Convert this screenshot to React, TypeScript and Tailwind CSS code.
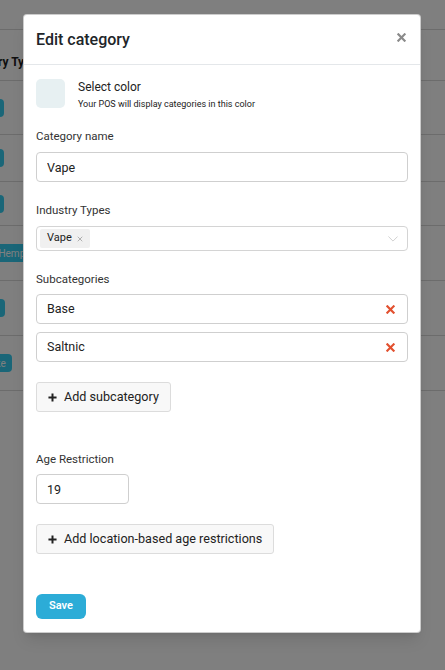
import React from 'react';

// rows of the categories table sitting behind the dialog
const tableRows = [
  { id: 1, height: 'h-[54px]', tags: ['Vape'] },
  { id: 2, height: 'h-[47px]', tags: ['Vape'] },
  { id: 3, height: 'h-[44px]', tags: ['Vape'] },
  { id: 4, height: 'h-[55px]', tags: ['CBD/Hemp', 'Vape'] },
  { id: 5, height: 'h-[55px]', tags: ['Other'] },
  { id: 6, height: 'h-[55px]', tags: ['Smoke'] },
];

const CloseIcon = ({ className }: { className?: string }) => (
  <svg viewBox="0 0 10 10" className={className} fill="none" stroke="currentColor" strokeWidth="2.4" strokeLinecap="square">
    <path d="M1.5 1.5 L8.5 8.5 M8.5 1.5 L1.5 8.5" />
  </svg>
);

const PlusIcon = () => (
  <svg viewBox="0 0 10 10" className="h-[9px] w-[9px]" fill="none" stroke="currentColor" strokeWidth="2.2">
    <path d="M5 0.5 V9.5 M0.5 5 H9.5" />
  </svg>
);

const Label = ({ children }: { children: React.ReactNode }) => (
  <div className="text-[11.5px] leading-[14px] text-[#333]">{children}</div>
);

const TextInput = ({ value, className = '' }: { value: string; className?: string }) => (
  <input
    readOnly
    value={value}
    className={`h-[30px] rounded-[4px] border border-[#cfcfcf] px-[10px] text-[12.5px] text-[#222] outline-none ${className}`}
  />
);

const SubcategoryRow = ({ name }: { name: string }) => (
  <div className="flex h-[30px] items-center justify-between rounded-[4px] border border-[#cfcfcf] pl-[10px] pr-[12px]">
    <span className="text-[12.5px] text-[#222]">{name}</span>
    <CloseIcon className="h-[9px] w-[9px] text-[#e2502f]" />
  </div>
);

const GhostButton = ({ children }: { children: React.ReactNode }) => (
  <button
    type="button"
    className="flex h-[30px] items-center gap-[7px] rounded-[3px] border border-[#dcdcdc] bg-[#f8f8f8] px-[11px] text-[12.6px] text-[#222]"
  >
    <PlusIcon />
    {children}
  </button>
);

export default function App() {
  return (
    <div className="relative h-[670px] w-[445px] overflow-hidden bg-white font-['Roboto',sans-serif]">
      {/* categories page underneath */}
      <div className="pt-[29px]">
        <div className="border-t border-[#d9d9d9]">
          <div className="flex h-[51px] items-end border-b border-[#d9d9d9] pb-[11px]">
            <span className="ml-[-36px] whitespace-nowrap text-[12px] font-bold leading-[14px] text-[#212121]">Industry Types</span>
          </div>
          {tableRows.map((row) => (
            <div key={row.id} className={`flex items-center border-b border-[#d9d9d9] ${row.height}`}>
              <div className="ml-[-31px] flex gap-[4px]">
                {row.tags.map((tag) => (
                  <span
                    key={tag}
                    className="flex h-[18px] items-center whitespace-nowrap rounded-[4px] bg-[#35cdf0] px-[6px] text-[10px] text-white"
                  >
                    {tag}
                  </span>
                ))}
              </div>
            </div>
          ))}
        </div>
      </div>

      {/* backdrop + dialog */}
      <div className="absolute inset-0 bg-black/50 pl-[23px] pt-[14px]">
        <div className="w-[398px] rounded-[4px] border border-black/20 bg-white shadow-lg">
          <div className="flex h-[50px] items-center justify-between border-b border-[#e4e7ea] pl-[12px] pr-[14px]">
            <h2 className="text-[16px] font-medium text-[#212529]">Edit category</h2>
            <CloseIcon className="mb-[5px] h-[9px] w-[9px] text-[#8a8a8a]" />
          </div>

          <div className="px-[12px] pb-[13px] pt-[14px]">
            <div className="flex gap-[13px]">
              <div className="h-[29px] w-[29px] rounded-[5px] bg-[#e7f0f2]" />
              <div className="mt-[1px]">
                <div className="text-[12px] leading-[14px] text-[#222]">Select color</div>
                <div className="mt-[4px] text-[9px] leading-[12px] text-[#222]">
                  Your POS will display categories in this color
                </div>
              </div>
            </div>

            <div className="mt-[19px]">
              <Label>Category name</Label>
              <TextInput value="Vape" className="mt-[9px] w-full" />
            </div>

            <div className="mt-[21px]">
              <Label>Industry Types</Label>
              <div className="mt-[9px] flex h-[25px] items-center justify-between rounded-[4px] border border-[#d4d4d4] pl-[3px] pr-[9px]">
                <span className="flex h-[19px] items-center gap-[5px] rounded-[2px] bg-[#f0f0f0] px-[7px] text-[11px] text-[#222]">
                  Vape
                  <svg viewBox="0 0 8 8" className="h-[6px] w-[6px] text-[#999]" fill="none" stroke="currentColor" strokeWidth="1">
                    <path d="M1 1 L7 7 M7 1 L1 7" />
                  </svg>
                </span>
                <svg viewBox="0 0 12 7" className="h-[6px] w-[10px] text-[#c8c8c8]" fill="none" stroke="currentColor" strokeWidth="1">
                  <path d="M0.5 0.5 L6 6 L11.5 0.5" />
                </svg>
              </div>
            </div>

            <div className="mt-[21px]">
              <Label>Subcategories</Label>
              <div className="mt-[8px] flex flex-col gap-[8px]">
                <SubcategoryRow name="Base" />
                <SubcategoryRow name="Saltnic" />
              </div>
              <div className="mt-[20px] flex">
                <GhostButton>Add subcategory</GhostButton>
              </div>
            </div>

            <div className="mt-[40px]">
              <Label>Age Restriction</Label>
              <TextInput value="19" className="mt-[8px] w-[93px]" />
              <div className="mt-[20px] flex">
                <GhostButton>Add location-based age restrictions</GhostButton>
              </div>
            </div>

            <button
              type="button"
              className="mt-[40px] block h-[25px] w-[50px] rounded-[6px] bg-[#2cacd7] text-[11px] font-semibold text-white"
            >
              Save
            </button>
          </div>
        </div>
      </div>
    </div>
  );
}
